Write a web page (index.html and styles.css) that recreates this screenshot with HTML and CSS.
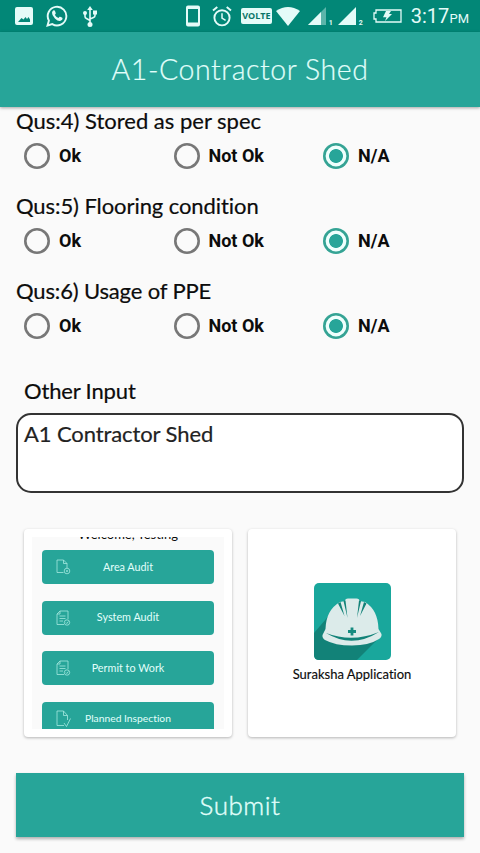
FILE: index.html
```html
<!DOCTYPE html>
<html lang="en">
<head>
<meta charset="utf-8">
<title>A1-Contractor Shed</title>
<link rel="stylesheet" href="styles.css">
</head>
<body>
<div class="statusbar">
  <div class="status-left">
    <svg width="18" height="18" viewBox="0 0 18 18"><path fill="currentColor" fill-rule="evenodd" d="M2 0H16Q18 0 18 2V16Q18 18 16 18H2Q0 18 0 16V2Q0 0 2 0ZM3 15H15V12.5L13.5 10L12 12L10.5 10L8.5 12.5L6.5 11Z"/></svg>
    <svg width="22" height="22" viewBox="0 0 22 22"><path fill="none" stroke="currentColor" stroke-width="1.9" d="M1.5 20.5L2.9 15.6A9.3 9.3 0 1 1 6.3 19.1Z"/><path fill="currentColor" d="M7.2 5.5Q8.7 5 9.1 6.3L9.8 8.2Q9.8 9 8.8 9.8Q10 12 12.4 13L13.6 11.8Q14.2 11.4 16.6 12.9Q16.8 15 14.6 15.8Q12 16.4 8.9 13.4Q5.8 10.3 6 7.7Q6.1 6.2 7.2 5.5Z"/></svg>
    <svg width="14" height="21" viewBox="0 0 14 21"><path fill="none" stroke="currentColor" stroke-width="1.6" d="M7 2V18M2 8V10.5Q2 12 3.5 12.6L7 14.5M12 6V9.5Q12 11 10.5 11.6L7 13"/><path fill="currentColor" d="M7 0L9.8 4H4.2ZM10 4.5H14V8.5H10Z"/><circle cx="2" cy="7" r="2" fill="currentColor"/><circle cx="7" cy="18.4" r="2.5" fill="currentColor"/></svg>
  </div>
  <div class="status-right">
    <svg width="14" height="22" viewBox="0 0 14 22"><path fill="currentColor" fill-rule="evenodd" d="M2 0.5H12Q14 0.5 14 2.5V19.5Q14 21.5 12 21.5H2Q0 21.5 0 19.5V2.5Q0 0.5 2 0.5ZM2 4V17.5H12V4Z"/></svg>
    <svg class="alarm" width="20" height="21" viewBox="0 0 20 21"><g fill="none" stroke="currentColor" stroke-width="1.9"><circle cx="10" cy="11.8" r="7.6"/><path d="M1 4.6L5.3 1M14.7 1L19 4.6"/><path stroke-width="1.5" d="M10 7.2V12.2L13.6 14.4"/></g></svg>
    <span class="volte">VOLTE</span>
    <svg class="wifi" width="24" height="19" viewBox="0 0 24 19"><path fill="currentColor" d="M0 4Q12-4 24 4L12 19Z"/></svg>
    <svg class="signal" width="18" height="18" viewBox="0 0 18 18"><path fill="currentColor" opacity=".4" d="M0 18L18 0V18Z"/><path fill="currentColor" d="M0 18L13 5V18Z"/></svg>
    <span class="sim">1</span>
    <svg class="signal2" width="18" height="18" viewBox="0 0 18 18"><path fill="currentColor" d="M0 18L18 0V18Z"/></svg>
    <span class="sim">2</span>
    <svg class="battery" width="29" height="14" viewBox="0 0 29 14"><path fill="none" stroke="currentColor" stroke-width="1.3" d="M3 1H28V13H3V10H1V4H3Z"/><path fill="currentColor" d="M13 2H18L16 5H19L12 12L13.5 8.2H10Z"/></svg>
    <span class="clock">3:17</span><span class="ampm">PM</span>
  </div>
</div>
<header class="appbar"><h1>A1-Contractor Shed</h1></header>
<main>
  <section class="question">
    <h2>Qus:4) Stored as per spec</h2>
    <div class="options">
      <label><i class="radio"></i>Ok</label>
      <label><i class="radio"></i>Not Ok</label>
      <label><i class="radio checked"></i>N/A</label>
    </div>
  </section>
  <section class="question">
    <h2 class="q5">Qus:5) Flooring condition</h2>
    <div class="options">
      <label><i class="radio"></i>Ok</label>
      <label><i class="radio"></i>Not Ok</label>
      <label><i class="radio checked"></i>N/A</label>
    </div>
  </section>
  <section class="question">
    <h2 class="q6">Qus:6) Usage of PPE</h2>
    <div class="options">
      <label><i class="radio"></i>Ok</label>
      <label><i class="radio"></i>Not Ok</label>
      <label><i class="radio checked"></i>N/A</label>
    </div>
  </section>
  <h2 class="other">Other Input</h2>
  <div class="field"><span>A1 Contractor Shed</span></div>
  <div class="cards">
    <div class="card">
      <div class="preview">
        <div class="welcome">Welcome, Testing</div>
        <div class="tile">
          <svg width="15" height="16" viewBox="0 0 15 16"><path d="M7.5 13.5H1V1H7.5L11 4.5V9M7.5 1V4.5H11"/><circle cx="11" cy="12" r="2.8"/><path d="M10 12H12M11 11V13"/></svg>
          <span>Area Audit</span>
        </div>
        <div class="tile">
          <svg width="15" height="16" viewBox="0 0 15 16"><path d="M8 14.5H1V4L4 1H12V9M1 4H4V1M3.5 6H9.5M3.5 8.5H9.5M3.5 11H7"/><circle cx="11" cy="12.5" r="2.7"/><path d="M9.8 12.5L10.8 13.5L12.4 11.5"/></svg>
          <span>System Audit</span>
        </div>
        <div class="tile">
          <svg width="15" height="16" viewBox="0 0 15 16"><path d="M8 14.5H1V4L4 1H12V9M1 4H4V1M3.5 6H9.5M3.5 8.5H9.5M3.5 11H7"/><circle cx="11" cy="12.5" r="2.7"/><path d="M9.8 12.5L10.8 13.5L12.4 11.5"/></svg>
          <span>Permit to Work</span>
        </div>
        <div class="tile wide">
          <svg width="15" height="18" viewBox="0 0 15 18"><path d="M8 15.5H1V1H7.5L11.5 5.5V10M7.5 1V5.5H11.5M8 13L10.5 16.5L14.5 8.5"/></svg>
          <span>Planned Inspection</span>
        </div>
      </div>
    </div>
    <div class="card brand">
      <svg width="77" height="77" viewBox="0 0 77 77">
        <rect width="77" height="77" rx="5" fill="#19a79c"/>
        <path fill="#128278" d="M0 50L24 22L66 54L43 77H5Q0 77 0 72Z"/>
        <path fill="#dcebea" d="M11.500 46Q12 27 26 19L31 18Q31 15.500 34 15.500H42.500Q45.500 15.500 45.500 18L51 19Q64 27 64.500 46L67.500 51Q68 54 65 56Q55 62.500 38 62.500Q21 62.500 11 57Q8 55 8.500 52Z"/>
        <path fill="#128278" d="M12 50Q38 60 65 49Q38 66 12 50ZM24 20.500L26.500 19L30.500 33ZM52.500 20.500L50 19L46 33ZM29.500 18L31.500 17.500L33.500 35ZM47 18L45 17.500L43 35Z"/>
        <path fill="none" stroke="#168b80" stroke-width="2.800" d="M38 44.500V52.500M34 48.500H42"/>
      </svg>
      <span>Suraksha Application</span>
    </div>
  </div>
  <button class="submit">Submit</button>
</main>
</body>
</html>
```

FILE: styles.css
```css
* { box-sizing: border-box; }
body {
  margin: 0;
  width: 480px;
  height: 853px;
  overflow: hidden;
  background: #fafafa;
  color: #0c0c0c;
  font-family: Lato, "Open Sans", sans-serif;
  font-variant-ligatures: none;
}
svg { display: block; flex: none; }
h1, h2 { margin: 0; font-weight: 400; white-space: nowrap; }

.statusbar {
  display: flex;
  justify-content: space-between;
  height: 32px;
  padding: 0 11px 0 15px;
  background: #028777;
  color: #e4fbf8;
  font-family: Roboto, sans-serif;
}
.status-left, .status-right { display: flex; align-items: center; }
.status-left { gap: 13px; }
.status-left svg:last-child { margin-left: 2px; }
.status-right { width: 283px; }
.alarm { margin-left: 12px; }
.volte {
  width: 31px;
  height: 16px;
  margin-left: 9px;
  border-radius: 2px;
  background: #e4fbf8;
  color: #087568;
  font: 700 9px/16px "Open Sans", sans-serif;
  text-align: center;
}
.wifi { margin-left: 4px; }
.signal { margin-left: 8px; }
.sim { width: 5px; margin: 13px 0 0 3px; font-size: 7px; font-weight: 700; line-height: 8px; }
.signal2 { margin-left: 4px; }
.battery { margin-left: 9px; }
.clock { width: 39px; margin-left: 9px; font-size: 20px; line-height: 32px; }
.ampm { margin-top: 4px; font-size: 13px; }

.appbar {
  display: flex;
  align-items: center;
  justify-content: center;
  height: 75px;
  background: #27a599;
  color: #e2fffb;
  box-shadow: 0 1px 3px rgba(0, 0, 0, .35);
}
.appbar h1 { margin-top: -2px; font-size: 28.5px; font-weight: 300; letter-spacing: .55px; -webkit-text-stroke: .2px; }

main { padding: 0 16px; }
.question { height: 85px; }
.question h2 { font-size: 22px; line-height: 28px; -webkit-text-stroke: .2px; }
.question .q5 { letter-spacing: -.08px; }
.question .q6 { letter-spacing: -.15px; }
.options { display: grid; grid-template-columns: repeat(3, 149.5px); height: 42px; padding-left: 8px; }
.options label { display: flex; align-items: center; gap: 9px; font: 700 18px/42px Roboto, sans-serif; }
.radio { width: 26px; height: 26px; border-radius: 50%; box-shadow: inset 0 0 0 2.6px #777; }
.checked { box-shadow: inset 0 0 0 2.6px #35a394; background: radial-gradient(circle, #27a599 6.5px, #effffd 7.3px); }

.other { margin: 14px 0 7px 8px; font-size: 22px; letter-spacing: -.15px; line-height: 30px; -webkit-text-stroke: .2px; }
.field {
  height: 80px;
  padding: 5px 6px;
  border: 2px solid #333;
  border-radius: 15px;
  background: #fff;
  color: #222;
  font-size: 22px;
  letter-spacing: -.1px;
  line-height: 28px;
  -webkit-text-stroke: .2px;
}
.cards { display: flex; gap: 16px; margin: 36px 8px; }
.card {
  width: 208px;
  height: 208px;
  padding: 8px;
  border-radius: 4px;
  background: #fff;
  box-shadow: 0 1px 3px rgba(0, 0, 0, .28);
}
.preview { display: flow-root; height: 192px; padding: 0 10px; overflow: hidden; background: #fafafa; }
.welcome { height: 13px; margin: -11px 0 11px; font-size: 13px; line-height: 17px; text-align: center; }
.tile {
  display: grid;
  grid-template-columns: 15px 1fr 15px;
  align-items: center;
  height: 34px;
  margin-bottom: 16.5px;
  padding: 0 14px;
  border-radius: 4px;
  background: #27a599;
  color: #e2fffb;
  font-size: 10.8px;
}
.tile span { margin-top: -2px; text-align: center; white-space: nowrap; }
.wide span { font-size: 10.3px; }
.tile svg { fill: none; stroke: #a5e8df; stroke-width: .8; }
.brand { display: flex; flex-direction: column; align-items: center; padding-top: 54px; font-size: 13px; line-height: 28px; -webkit-text-stroke: .15px; }
.submit {
  display: block;
  width: 448px;
  height: 64px;
  padding: 0;
  border: 0;
  background: #27a599;
  color: #e2fffb;
  box-shadow: 0 2px 3px rgba(0, 0, 0, .3);
  font: 300 26px/62px Lato, sans-serif;
  letter-spacing: .5px;
  -webkit-text-stroke: .4px;
}
```
